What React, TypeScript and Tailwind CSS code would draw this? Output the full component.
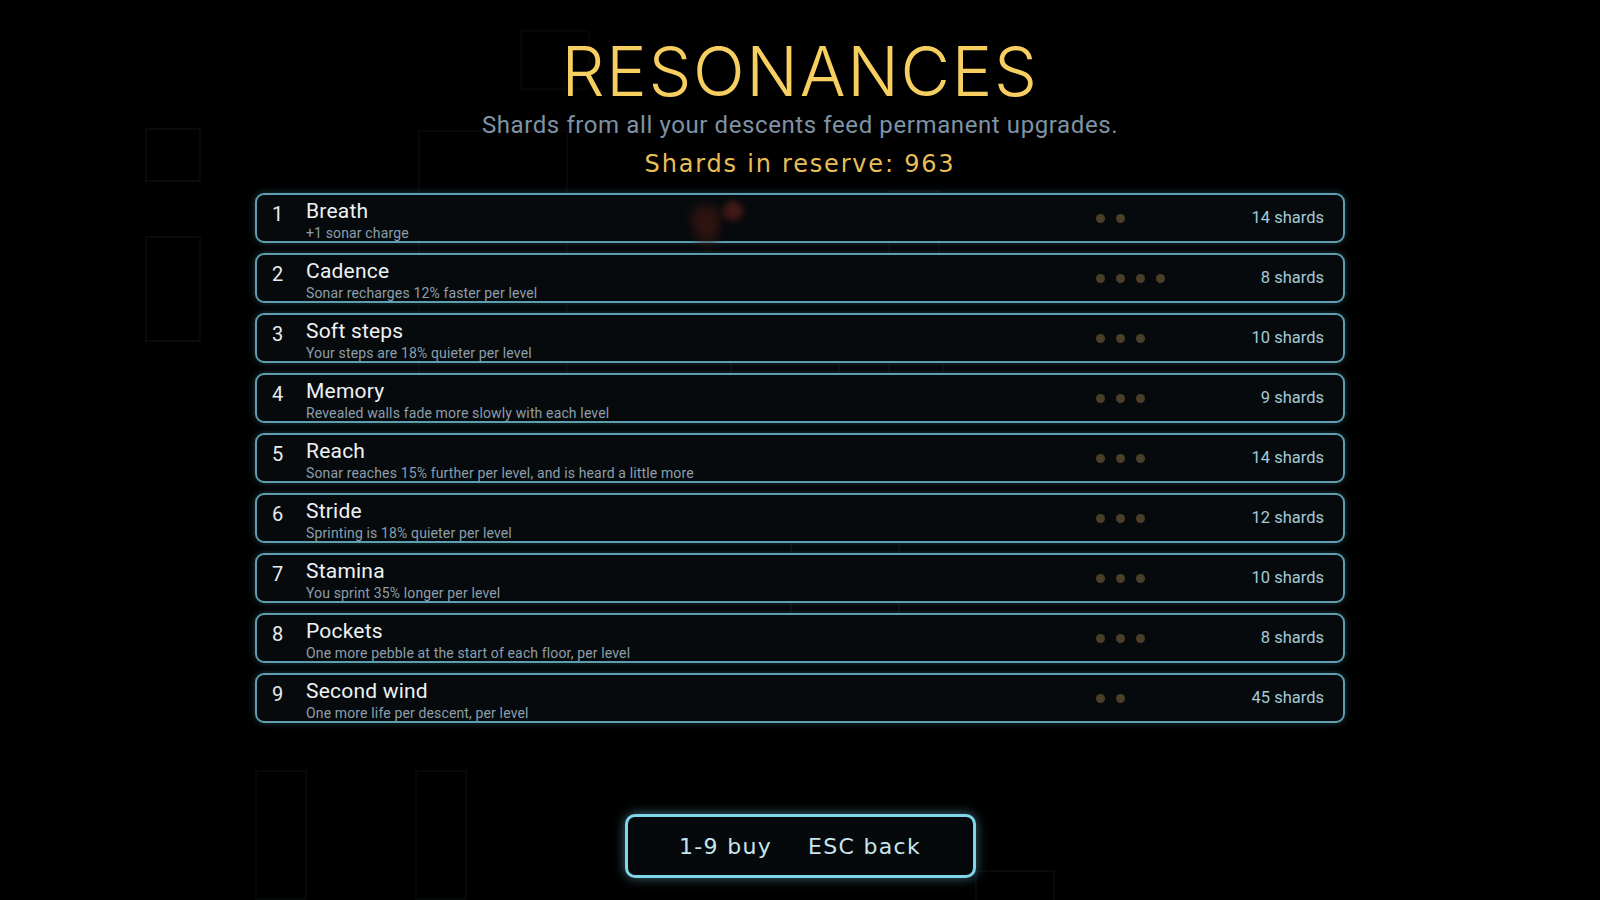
import React from "react"

type Upgrade = {
  name: string
  desc: string
  dots: number
  cost: number
}

const upgrades: Upgrade[] = [
  { name: "Breath", desc: "+1 sonar charge", dots: 2, cost: 14 },
  { name: "Cadence", desc: "Sonar recharges 12% faster per level", dots: 4, cost: 8 },
  { name: "Soft steps", desc: "Your steps are 18% quieter per level", dots: 3, cost: 10 },
  { name: "Memory", desc: "Revealed walls fade more slowly with each level", dots: 3, cost: 9 },
  { name: "Reach", desc: "Sonar reaches 15% further per level, and is heard a little more", dots: 3, cost: 14 },
  { name: "Stride", desc: "Sprinting is 18% quieter per level", dots: 3, cost: 12 },
  { name: "Stamina", desc: "You sprint 35% longer per level", dots: 3, cost: 10 },
  { name: "Pockets", desc: "One more pebble at the start of each floor, per level", dots: 3, cost: 8 },
  { name: "Second wind", desc: "One more life per descent, per level", dots: 2, cost: 45 },
]

// faint maze walls left over from the game behind the overlay
const walls = [
  { l: 145, t: 128, w: 56, h: 54, c: "border-[#070b0d]" },
  { l: 145, t: 236, w: 56, h: 106, c: "border-[#070b0d]" },
  { l: 418, t: 130, w: 150, h: 260, c: "border-[#0d0606]" },
  { l: 730, t: 340, w: 110, h: 56, c: "border-[#0e0806]" },
  { l: 888, t: 190, w: 52, h: 105, c: "border-[#0d0606]" },
  { l: 888, t: 340, w: 56, h: 56, c: "border-[#0e0806]" },
  { l: 520, t: 30, w: 70, h: 60, c: "border-[#0a0505]" },
  { l: 790, t: 500, w: 110, h: 160, c: "border-[#070b0d]" },
  { l: 255, t: 770, w: 52, h: 130, c: "border-[#060909]" },
  { l: 415, t: 770, w: 52, h: 130, c: "border-[#060909]" },
  { l: 975, t: 870, w: 80, h: 40, c: "border-[#070b0d]" },
]

function Row({ index, item }: { index: number; item: Upgrade }) {
  return (
    <div className="flex h-[50px] items-stretch rounded-[9px] border-2 border-[#5b9fb1] bg-[#070b0e]/95 shadow-[0_0_7px_rgba(90,170,195,0.35)]">
      <div className="w-[49px] shrink-0 pl-[15px] pt-[6px] text-[20px] leading-[26px] text-[#e6ecef]">
        {index + 1}
      </div>
      <div className="flex w-[790px] shrink-0 flex-col pt-[3px]">
        <span className="text-[21px] leading-[27px] tracking-[0.01em] text-[#eef2f4]">{item.name}</span>
        <span className="text-[14px] leading-[17px] tracking-[0.01em] text-[#8c9fab]">{item.desc}</span>
      </div>
      <div className="flex items-center gap-[11px]">
        {Array.from({ length: item.dots }).map((_, i) => (
          <span key={i} className="h-[9px] w-[9px] rounded-full bg-[#4a4029]" />
        ))}
      </div>
      <div className="flex flex-1 items-center justify-end pr-[19px] text-[16.5px] text-[#a3cad6]">
        {item.cost} shards
      </div>
    </div>
  )
}

export default function App() {
  return (
    <div
      className="relative flex h-[900px] w-full flex-col items-center overflow-hidden bg-black"
      style={{ fontFamily: "Roboto, 'Noto Sans', sans-serif" }}
    >
      {/* Background */}
      {walls.map((w, i) => (
        <div
          key={i}
          className={`absolute border-2 ${w.c}`}
          style={{ left: w.l, top: w.t, width: w.w, height: w.h }}
        />
      ))}

      {/* Header */}
      <div className="relative flex flex-col items-center pt-[37px]">
        <h1
          className="text-[68px] font-light leading-[68px] tracking-[0.025em] text-[#f6cf60]"
          style={{ fontFamily: "Inter, 'DejaVu Sans', sans-serif" }}
        >
          RESONANCES
        </h1>
        <p className="mt-[4px] text-[24px] leading-[32px] tracking-[0.025em] text-[#7e93a6]">
          Shards from all your descents feed permanent upgrades.
        </p>
        <p
          className="mt-[8px] text-[24px] leading-[30px] tracking-[0.075em] text-[#e7bf58]"
          style={{ fontFamily: "'DejaVu Sans', sans-serif" }}
        >
          Shards in reserve: 963
        </p>
      </div>

      {/* Upgrade list */}
      <div className="relative mt-[14px] flex w-[1090px] flex-col gap-[10px]">
        <div className="absolute left-[436px] top-[12px] h-[30px] w-[30px] rounded-full bg-[#5a2016]/45 blur-[5px]" />
        <div className="absolute left-[468px] top-[8px] h-[20px] w-[20px] rounded-full bg-[#7a2a1e]/50 blur-[3px]" />
        <div className="absolute left-[440px] top-[32px] h-[24px] w-[24px] rounded-full bg-[#4a1a14]/35 blur-[5px]" />
        {upgrades.map((u, i) => (
          <Row key={u.name} index={i} item={u} />
        ))}
      </div>

      {/* Controls */}
      <div
        className="relative mt-auto mb-[22px] flex h-[64px] w-[351px] items-center justify-center gap-[36px] rounded-[10px] border-[3px] border-[#7fd5ea] bg-[#05090b] text-[22px] tracking-[0.06em] text-[#c8e5ee] shadow-[0_0_12px_rgba(120,210,235,0.5)]"
        style={{ fontFamily: "'DejaVu Sans', sans-serif" }}
      >
        <span>1-9 buy</span>
        <span>ESC back</span>
      </div>
    </div>
  )
}
